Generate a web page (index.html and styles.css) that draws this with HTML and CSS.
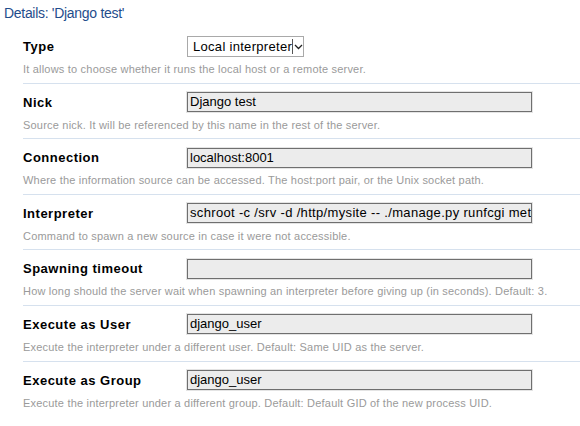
FILE: index.html
```html
<!DOCTYPE html>
<html>
<head>
<meta charset="utf-8">
<link rel="stylesheet" href="styles.css">
</head>
<body>
<h2 class="title">Details: 'Django test'</h2>
<div class="form">
  <div class="row">
    <div class="field">
      <span class="label">Type</span>
      <div class="select"><span class="select-text">Local interpreter</span><span class="caret"><svg width="9" height="6" viewBox="0 0 9 6"><path d="M1 1 L4.5 4.5 L8 1" fill="none" stroke="#222" stroke-width="1.3"/></svg></span></div>
    </div>
    <div class="desc">It allows to choose whether it runs the local host or a remote server.</div>
  </div>
  <div class="row">
    <div class="field">
      <span class="label">Nick</span>
      <div class="input">Django test</div>
    </div>
    <div class="desc">Source nick. It will be referenced by this name in the rest of the server.</div>
  </div>
  <div class="row">
    <div class="field">
      <span class="label">Connection</span>
      <div class="input">localhost:8001</div>
    </div>
    <div class="desc">Where the information source can be accessed. The host:port pair, or the Unix socket path.</div>
  </div>
  <div class="row">
    <div class="field">
      <span class="label">Interpreter</span>
      <div class="input wide">schroot -c /srv -d /http/mysite -- ./manage.py runfcgi meth</div>
    </div>
    <div class="desc">Command to spawn a new source in case it were not accessible.</div>
  </div>
  <div class="row">
    <div class="field">
      <span class="label">Spawning timeout</span>
      <div class="input"></div>
    </div>
    <div class="desc">How long should the server wait when spawning an interpreter before giving up (in seconds). Default: 3.</div>
  </div>
  <div class="row">
    <div class="field">
      <span class="label">Execute as User</span>
      <div class="input">django_user</div>
    </div>
    <div class="desc">Execute the interpreter under a different user. Default: Same UID as the server.</div>
  </div>
  <div class="row last">
    <div class="field">
      <span class="label">Execute as Group</span>
      <div class="input">django_user</div>
    </div>
    <div class="desc">Execute the interpreter under a different group. Default: Default GID of the new process UID.</div>
  </div>
</div>
</body>
</html>
```
FILE: styles.css
```css
html, body {
  margin: 0;
  padding: 0;
  background: #fff;
  font-family: "Liberation Sans", Arial, sans-serif;
}
.title {
  margin: 0;
  padding: 5px 0 0 4px;
  height: 22px;
  font-size: 14px;
  font-weight: normal;
  color: #1f4d8c;
  letter-spacing: -0.3px;
  line-height: 16px;
}
.form {
  padding-left: 23px;
  padding-top: 1px;
}
.row {
  padding-top: 8px;
  padding-bottom: 6.6px;
  border-bottom: 1px solid #d6e1ee;
}
.row.last {
  border-bottom: none;
}
.field {
  display: flex;
  align-items: center;
  height: 21px;
}
.label {
  width: 164px;
  font-size: 13px;
  font-weight: bold;
  letter-spacing: 0.5px;
  color: #000;
}
.input {
  box-sizing: border-box;
  width: 345px;
  height: 20px;
  border: 1px solid #6f6f6f;
  box-shadow: 0 0 0 1px #e4e4e4;
  background: #ececec;
  font-size: 13px;
  line-height: 18px;
  padding-left: 2px;
  color: #000;
  white-space: nowrap;
  overflow: hidden;
}
.input.wide {
  letter-spacing: 0.33px;
}
.select {
  box-sizing: border-box;
  width: 117px;
  height: 21px;
  border: 1px solid #a9a9a9;
  background: #fff;
  display: flex;
  align-items: center;
  font-size: 13px;
  color: #000;
  overflow: hidden;
}
.select-text {
  width: 106px;
  padding-left: 5px;
  box-sizing: border-box;
  overflow: hidden;
  white-space: nowrap;
  border-right: 1px solid #555;
  line-height: 15px;
  letter-spacing: 0.3px;
}
.caret {
  display: flex;
  align-items: center;
  padding-left: 1px;
}
.desc {
  margin-top: 6px;
  font-size: 11px;
  line-height: 13px;
  color: #9a9a9a;
  letter-spacing: 0.2px;
  white-space: nowrap;
}
```
